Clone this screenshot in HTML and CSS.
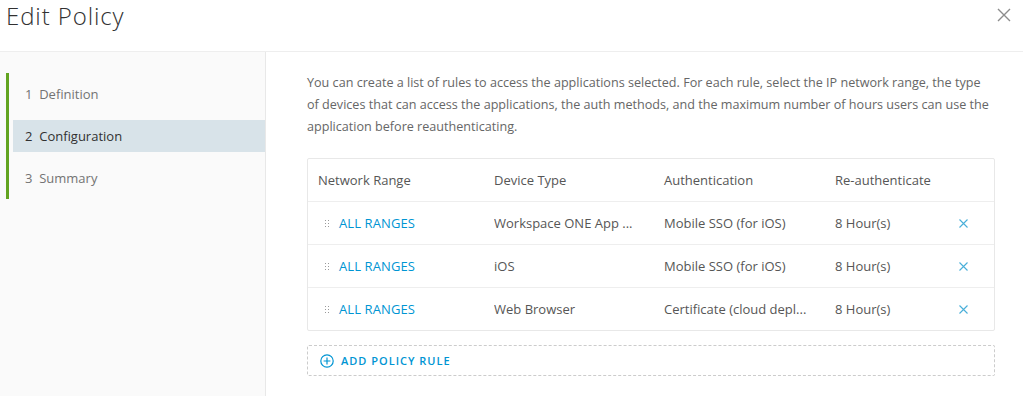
FILE: index.html
```html
<!DOCTYPE html>
<html lang="en">
<head>
    <meta charset="UTF-8">
    <meta name="viewport" content="width=device-width, initial-scale=1.0">
    <title>Edit Policy</title>
    <link rel="stylesheet" href="styles.css">
</head>
<body>
    <div class="modal">
        <div class="modal-header">
            <h1>Edit Policy</h1>
            <button class="close-btn" aria-label="Close">
                <svg width="14" height="14" viewBox="0 0 14 14"><path d="M1 1L13 13M13 1L1 13" stroke="#8c8c8c" stroke-width="1.4" fill="none"/></svg>
            </button>
        </div>

        <div class="modal-body">
            <div class="steps">
                <div class="step-list">
                    <div class="step">1 &nbsp;Definition</div>
                    <div class="step active">2 &nbsp;Configuration</div>
                    <div class="step">3 &nbsp;Summary</div>
                </div>
            </div>

            <div class="content">
                <p class="intro">You can create a list of rules to access the applications selected. For each rule, select the IP network range, the type of devices that can access the applications, the auth methods, and the maximum number of hours users can use the application before reauthenticating.</p>

                <div class="rules">
                    <div class="rule-row rule-head">
                        <div>Network Range</div>
                        <div>Device Type</div>
                        <div>Authentication</div>
                        <div>Re-authenticate</div>
                        <div></div>
                    </div>
                    <div class="rule-row">
                        <div class="range"><span class="grip"></span><a href="#">ALL RANGES</a></div>
                        <div class="cut">Workspace ONE App ...</div>
                        <div class="cut">Mobile SSO (for iOS)</div>
                        <div>8 Hour(s)</div>
                        <div class="remove"><svg width="9" height="9" viewBox="0 0 9 9"><path d="M0.5 0.5L8.5 8.5M8.5 0.5L0.5 8.5" stroke="#49afd9" stroke-width="1.1"/></svg></div>
                    </div>
                    <div class="rule-row">
                        <div class="range"><span class="grip"></span><a href="#">ALL RANGES</a></div>
                        <div class="cut">iOS</div>
                        <div class="cut">Mobile SSO (for iOS)</div>
                        <div>8 Hour(s)</div>
                        <div class="remove"><svg width="9" height="9" viewBox="0 0 9 9"><path d="M0.5 0.5L8.5 8.5M8.5 0.5L0.5 8.5" stroke="#49afd9" stroke-width="1.1"/></svg></div>
                    </div>
                    <div class="rule-row">
                        <div class="range"><span class="grip"></span><a href="#">ALL RANGES</a></div>
                        <div class="cut">Web Browser</div>
                        <div class="cut">Certificate (cloud depl...</div>
                        <div>8 Hour(s)</div>
                        <div class="remove"><svg width="9" height="9" viewBox="0 0 9 9"><path d="M0.5 0.5L8.5 8.5M8.5 0.5L0.5 8.5" stroke="#49afd9" stroke-width="1.1"/></svg></div>
                    </div>
                </div>

                <button class="add-rule">
                    <svg width="14" height="14" viewBox="0 0 14 14"><circle cx="7" cy="7" r="6.2" stroke="#0095d3" stroke-width="1.2" fill="none"/><path d="M7 3.6V10.4M3.6 7H10.4" stroke="#0095d3" stroke-width="1.2"/></svg>
                    ADD POLICY RULE
                </button>
            </div>
        </div>
    </div>
</body>
</html>
```

FILE: styles.css
```css
* {
    margin: 0;
    padding: 0;
    box-sizing: border-box;
}

body {
    font-family: 'Open Sans', 'Liberation Sans', sans-serif;
    background: white;
    color: #565656;
    font-size: 13px;
}

.modal {
    width: 1023px;
    height: 396px;
    display: flex;
    flex-direction: column;
    overflow: hidden;
}

.modal-header {
    height: 52px;
    display: flex;
    justify-content: space-between;
    align-items: flex-start;
    border-bottom: 1px solid #eeeeee;
    padding: 0 12px 0 6px;
}

.modal-header h1 {
    font-weight: 300;
    font-size: 24px;
    color: #313131;
    line-height: 32px;
    letter-spacing: 0.9px;
}

.close-btn {
    background: none;
    border: none;
    margin-top: 8px;
    cursor: pointer;
}

.modal-body {
    flex: 1;
    display: flex;
}

.steps {
    width: 266px;
    background: #fafafa;
    border-right: 1px solid #e8e8e8;
    padding: 21px 0 0 6px;
}

.step-list {
    border-left: 3px solid #62a420;
    padding: 0 0 0 4px;
}

.step {
    height: 42px;
    display: flex;
    align-items: center;
    padding-left: 12px;
    color: #737373;
    font-size: 13px;
}

.step.active {
    background: #d8e3e9;
    color: #313131;
    height: 32px;
    margin: 5px 0;
    font-weight: 500;
}

.content {
    flex: 1;
    padding: 20px 28px 0 41px;
}

.intro {
    line-height: 22px;
    font-size: 12.6px;
    color: #666666;
    margin-bottom: 20px;
}

.rules {
    border: 1px solid #e8e8e8;
    border-radius: 2px;
}

.rule-row {
    display: grid;
    grid-template-columns: 176px 170px 171px 111px 1fr;
    height: 43px;
    align-items: center;
    padding-left: 10px;
    border-top: 1px solid #eeeeee;
}

.rule-row.rule-head {
    border-top: none;
    height: 42px;
}

.cut {
    white-space: nowrap;
    overflow: hidden;
}

.range {
    display: flex;
    align-items: center;
}

.range a {
    color: #0095d3;
    text-decoration: none;
    letter-spacing: 0.1px;
}

.grip {
    width: 5px;
    height: 8px;
    margin: 0 10px 0 6px;
    background-image: radial-gradient(circle, #9a9a9a 0.9px, transparent 1px);
    background-size: 3px 3px;
}

.remove {
    display: flex;
    align-items: center;
    padding-left: 13px;
}

.add-rule {
    width: 100%;
    height: 31px;
    margin-top: 14px;
    border: 1px dashed #cccccc;
    border-radius: 2px;
    background: white;
    display: flex;
    align-items: center;
    gap: 7px;
    padding-left: 12px;
    font-family: inherit;
    font-size: 11px;
    font-weight: 600;
    letter-spacing: 1px;
    color: #0095d3;
    cursor: pointer;
}
```
